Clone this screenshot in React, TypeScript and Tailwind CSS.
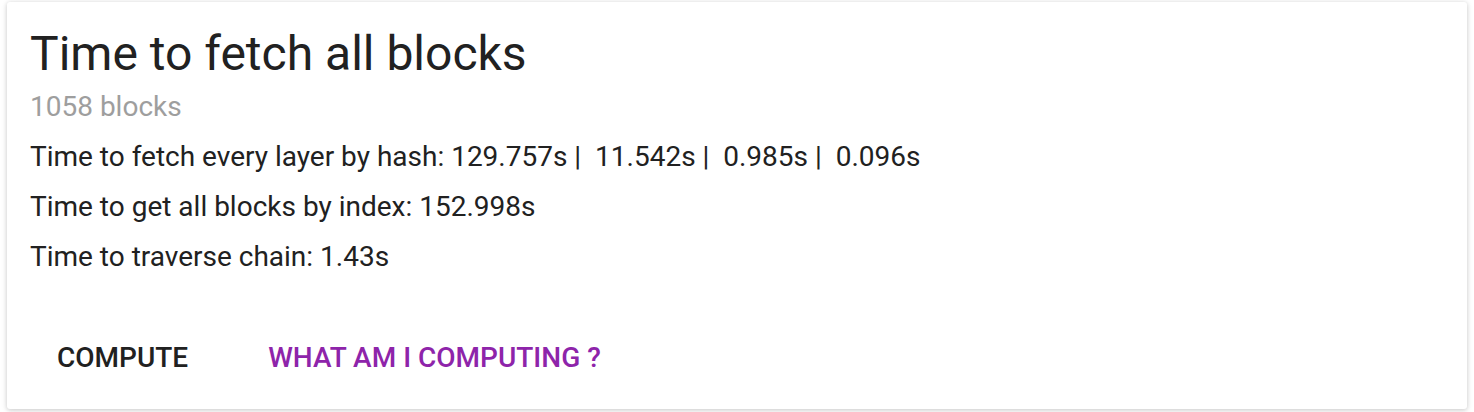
import React from "react";

const timings = ["129.757s", "11.542s", "0.985s", "0.096s"];

export default function App() {
  return (
    <div className="min-h-screen bg-white pt-[2px] px-[7px] font-['Roboto',sans-serif]">
      <div className="h-[407px] rounded-[3px] bg-white shadow-[0_1px_6px_rgba(0,0,0,0.12),0_1px_4px_rgba(0,0,0,0.12)] flex flex-col">
        <div className="px-[23px] pt-[24px]">
          <h1 className="text-[48px] leading-[56px] text-[#212121] font-normal">Time to fetch all blocks</h1>
          <p className="mt-[5px] text-[28px] leading-[40px] text-[#9e9e9e]">1058 blocks</p>
        </div>
        <div className="px-[23px] pt-[5px] text-[28px] leading-[50px] text-[#212121]">
          <p className="whitespace-pre">
            Time to fetch every layer by hash: {timings.join(" |  ")}
          </p>
          <p>Time to get all blocks by index: 152.998s</p>
          <p>Time to traverse chain: 1.43s</p>
        </div>
        <div className="mt-auto flex gap-[12px] px-[16px] pb-[15px]">
          <button className="h-[72px] px-[34px] text-[28px] font-medium uppercase text-[#212121]">
            Compute
          </button>
          <button className="h-[72px] px-[34px] text-[28px] font-medium uppercase text-[#8e24aa]">
            What am I computing ?
          </button>
        </div>
      </div>
    </div>
  );
}
